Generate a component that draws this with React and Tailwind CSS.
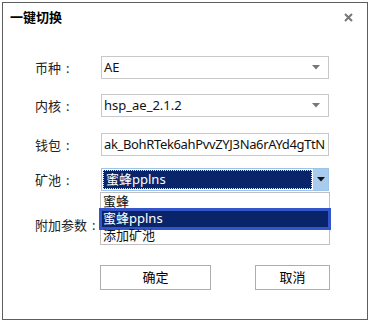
const font = { fontFamily: '"Noto Sans", "Noto Sans CJK SC", sans-serif' };

function Arrow({ color = "#777" }) {
    return (
        <svg width="8" height="5" viewBox="0 0 8 5">
            <path d="M0 0 H8 L4 4.5 Z" fill={color} />
        </svg>
    );
}

function Label({ text }) {
    return (
        <span>
            {text}
            <span className="ml-[5px]">:</span>
        </span>
    );
}

function Field({ label, children, className = "" }) {
    return (
        <div className={`flex items-center h-[23px] ${className}`}>
            <div className="w-[66px] pt-[3px] text-[13px] text-[#222]">
                <Label text={label} />
            </div>
            {children}
        </div>
    );
}

function Select({ value }) {
    return (
        <div className="w-[228px] h-[23px] border border-[#c8c8c8] flex items-center pl-[2px] pr-[8px]">
            <span className="flex-1 text-[13px] text-[#111] leading-none">{value}</span>
            <Arrow />
        </div>
    );
}

export default function App() {
    const options = ["蜜蜂", "蜜蜂pplns", "添加矿池"];

    return (
        <div className="w-[370px] h-[322px] bg-white p-[2px]" style={font}>
            <div className="w-[366px] h-[318px] border border-[#5e5e5e] bg-white flex flex-col">
                <div className="flex items-center justify-between h-[29px] pl-[7px] pr-[14px]">
                    <span className="text-[13px] font-bold text-black">一键切换</span>
                    <svg width="9" height="9" viewBox="0 0 9 9">
                        <path d="M1 1 L8 8 M8 1 L1 8" stroke="#777" strokeWidth="2" />
                    </svg>
                </div>

                <div className="pl-[32px] mt-[24px] flex flex-col">
                    <Field label="币种">
                        <Select value="AE" />
                    </Field>
                    <Field label="内核" className="mt-[15px]">
                        <Select value="hsp_ae_2.1.2" />
                    </Field>
                    <Field label="钱包" className="mt-[16px]">
                        <div className="w-[228px] h-[23px] border border-[#c8c8c8] flex items-center pl-[2px] overflow-hidden">
                            <span className="text-[13px] text-[#111] whitespace-nowrap tracking-[-0.35px] leading-none">
                                ak_BohRTek6ahPvvZYJ3Na6rAYd4gTtN
                            </span>
                        </div>
                    </Field>
                    <Field label="矿池" className="mt-[12px] relative z-10">
                        <div className="relative w-[228px] h-[23px]">
                            <div className="w-full h-full border border-[#9fc4ea] flex">
                                <div className="flex-1 m-[1px] border border-dotted border-[#e8e8c8] bg-[#0a246a] flex items-center pl-[2px]">
                                    <span className="text-[13px] text-white leading-none">蜜蜂pplns</span>
                                </div>
                                <div className="w-[15px] bg-[#a9cbee] flex items-center justify-center">
                                    <Arrow color="#111" />
                                </div>
                            </div>
                            <div className="absolute left-[-1px] top-[24px] w-[230px] border border-[#c0c0c0] bg-white flex flex-col">
                                {options.map((opt, i) => (
                                    <div key={opt} className="relative h-[17px] flex items-center pl-[2px]">
                                        {i === 1 && (
                                            <div className="absolute -left-[2px] -right-[2px] -top-[2px] -bottom-[3px] border-[3px] border-[#3454c9] bg-[#0a246a]" />
                                        )}
                                        <span className={`relative text-[13px] leading-none ${i === 1 ? "text-white" : "text-[#111]"}`}>
                                            {opt}
                                        </span>
                                    </div>
                                ))}
                            </div>
                        </div>
                    </Field>
                    <div className="mt-[26px] h-[18px] flex items-center text-[13px] text-[#222]">
                        <Label text="附加参数" />
                    </div>
                </div>

                <div className="flex pl-[97px] mt-[30px] gap-[44px]">
                    <button className="w-[111px] h-[25px] border border-[#adadad] bg-white text-[13px] text-black">确定</button>
                    <button className="w-[75px] h-[25px] border border-[#adadad] bg-white text-[13px] text-black">取消</button>
                </div>
            </div>
        </div>
    );
}
